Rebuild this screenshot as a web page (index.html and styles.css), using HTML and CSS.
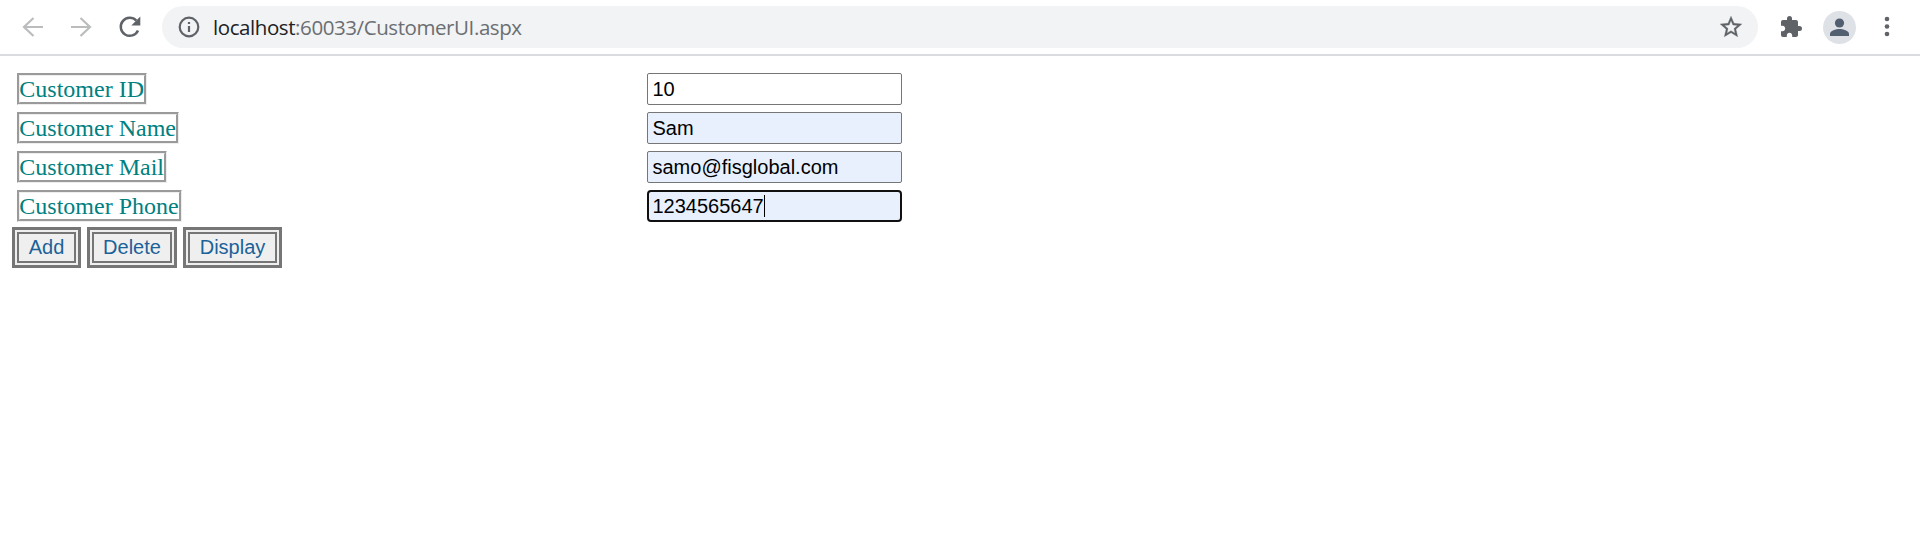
FILE: index.html
```
<!DOCTYPE html>
<html lang="en">
<head>
<meta charset="utf-8">
<title>Customer</title>
<link rel="stylesheet" href="styles.css">
</head>
<body>
<header class="toolbar">
  <svg class="nav" viewBox="0 0 24 24"><path d="M22 12H3M12.500 3L3 12l9.500 9"/></svg>
  <svg class="nav" viewBox="0 0 24 24"><path d="M2 12h19M11.500 3L21 12l-9.500 9"/></svg>
  <svg class="reload" viewBox="0 0 24 24"><path d="M20 15.500A9 9 0 1 1 18.300 5.600" fill="none" stroke="#5f6368" stroke-width="2.500"/><path d="M22.300 1.500v9h-9z" fill="#5f6368"/></svg>
  <div class="address">
    <svg class="info" viewBox="0 0 24 24"><circle cx="12" cy="12" r="9.300"/><path d="M12 11v6M12 7v2"/></svg>
    <span class="url"><span class="host">localhost</span>:60033/CustomerUI.aspx</span>
    <svg class="star" viewBox="0 0 24 24"><path d="M22 9.240l-7.190-.62L12 2 9.190 8.630 2 9.240l5.460 4.730L5.820 21 12 17.270 18.180 21l-1.630-7.030L22 9.240zM12 15.400l-3.760 2.270 1-4.280-3.320-2.880 4.380-.38L12 6.100l1.710 4.040 4.380.38-3.320 2.880 1 4.280L12 15.400z"/></svg>
  </div>
  <svg class="puzzle" viewBox="0 0 24 24"><path d="M20.500 11H19V7c0-1.100-.9-2-2-2h-4V3.500a2.500 2.500 0 0 0-5 0V5H4c-1.100 0-1.990.9-1.990 2v3.800H3.500c1.490 0 2.700 1.210 2.700 2.700s-1.210 2.700-2.700 2.700H2V20c0 1.100.9 2 2 2h3.800v-1.500c0-1.490 1.210-2.700 2.700-2.700s2.700 1.210 2.700 2.700V22H17c1.100 0 2-.9 2-2v-4h1.500a2.500 2.500 0 0 0 0-5z"/></svg>
  <svg class="avatar" viewBox="0 0 33 33"><circle cx="16.500" cy="16.500" r="16.500" fill="#dee1e6"/><circle cx="16.500" cy="12" r="4.600" fill="#525f70"/><path d="M7 25v-2c0-3.500 6-5 9.500-5s9.500 1.500 9.500 5v2z" fill="#525f70"/></svg>
  <svg class="more" viewBox="0 0 6 22"><circle cx="3" cy="3" r="2.300"/><circle cx="3" cy="10.500" r="2.300"/><circle cx="3" cy="18" r="2.300"/></svg>
</header>
<main class="page">
  <div class="row"><div class="cell"><span class="label">Customer ID</span></div><div class="field plain">10</div></div>
  <div class="row"><div class="cell"><span class="label">Customer Name</span></div><div class="field">Sam</div></div>
  <div class="row"><div class="cell"><span class="label">Customer Mail</span></div><div class="field">samo@fisglobal.com</div></div>
  <div class="row"><div class="cell"><span class="label">Customer Phone</span></div><div class="field focused">1234565647<span class="caret"></span></div></div>
  <div class="buttons"><button class="btn add">Add</button><button class="btn delete">Delete</button><button class="btn display">Display</button></div>
</main>
</body>
</html>
```
FILE: styles.css
```
body { margin: 0; background: #fff; }
.toolbar { display: flex; align-items: center; box-sizing: border-box; height: 56px; padding: 0 0 0 21px; border-bottom: 2px solid #dadce0; }
.toolbar svg { flex: none; }
.nav { width: 24px; height: 24px; margin-right: 24px; fill: none; stroke: #babcbe; stroke-width: 2.2; }
.reload { width: 24px; height: 24px; margin-left: 1px; }
.address { display: flex; align-items: center; box-sizing: border-box; width: 1596px; height: 42px; margin-left: 20px; padding: 0 14px 0 15px; border-radius: 21px; background: #f1f3f4; }
.info { width: 24px; height: 24px; fill: none; stroke: #5f6368; stroke-width: 2.2; }
.url { flex: 1; margin-left: 12px; font: 20.5px/28px "Open Sans", sans-serif; letter-spacing: -0.42px; color: #6b6e72; }
.host { color: #202124; }
.star { width: 26px; height: 26px; fill: #5f6368; stroke: #5f6368; stroke-width: 0.3; }
.puzzle { width: 24px; height: 24px; margin-left: 21px; fill: #5f6368; }
.avatar { width: 33px; height: 33px; margin-left: 20px; }
.more { width: 6px; height: 22px; margin-left: 28px; fill: #5f6368; }
.page { padding: 17px 0 0 12px; }
.row { display: flex; height: 32px; margin-bottom: 7px; padding-left: 5px; }
.cell { width: 630px; }
.label { display: inline-block; box-sizing: border-box; height: 32px; border: 3px groove #eee; font: 24px/26px "Liberation Serif", serif; text-indent: -0.7px; color: #008080; }
.field { display: flex; align-items: center; box-sizing: border-box; width: 255px; height: 32px; padding: 0 4.5px; border: 1px solid #767676; border-radius: 2px; background: #e8f0fe; font: 20px/28px "Liberation Sans", sans-serif; color: #000; }
.plain { background: #fff; }
.focused { border: 2px solid #101010; border-radius: 4px; padding: 0 3.5px; }
.caret { width: 1px; height: 22px; background: #000; }
.buttons { display: flex; gap: 6px; margin-top: -2px; }
.btn { box-sizing: border-box; height: 41px; padding: 0 0 1px; border: 3px solid #767676; box-shadow: inset 0 0 0 2px #efefef, inset 0 0 0 4px #767676; background: #efefef; font: 20px/26px "Liberation Sans", sans-serif; color: #1b6299; }
.add { width: 69px; }
.delete { width: 90px; }
.display { width: 99px; }
```
